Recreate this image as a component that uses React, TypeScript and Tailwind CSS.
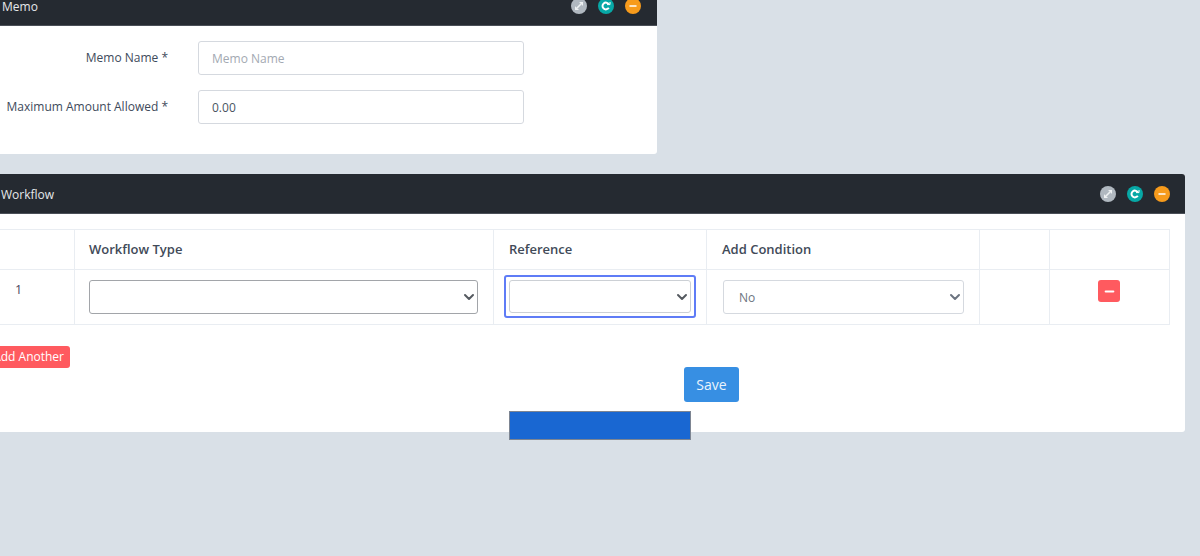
import React from "react";
import { Minus, ChevronDown } from "lucide-react";

function HeaderIcons() {
  return (
    <div className="flex items-center gap-[11px]">
      <span className="flex h-4 w-4 items-center justify-center rounded-full bg-[#b0b8c0]">
        <svg width="10" height="10" viewBox="0 0 10 10" fill="none" stroke="#eef1f3" strokeWidth="1.6" strokeLinecap="round">
          <path d="M2 8 L8 2" />
          <path d="M6 1.6 H8.4 V4" strokeWidth="1.2" />
          <path d="M1.6 6 V8.4 H4" strokeWidth="1.2" />
        </svg>
      </span>
      <span className="flex h-4 w-4 items-center justify-center rounded-full bg-[#07a8a6]">
        <svg width="10" height="10" viewBox="0 0 10 10" fill="none" stroke="#ffffff" strokeWidth="2">
          <path d="M7.8 3.2 A3.4 3.4 0 1 0 7.8 6.8" />
          <path d="M6 3.6 H9 V1" strokeWidth="1" />
        </svg>
      </span>
      <span className="flex h-4 w-4 items-center justify-center rounded-full bg-[#f79b1c] text-white">
        <Minus size={10} strokeWidth={4} />
      </span>
    </div>
  );
}

function MemoRow({ label, placeholder, value }: { label: string; placeholder?: string; value?: string }) {
  return (
    <div className="flex items-center">
      <label className="w-[208px] text-right text-[12px] text-[#3e4a5b]">{label}</label>
      <input
        readOnly
        placeholder={placeholder}
        value={value}
        className="ml-[30px] h-[34px] w-[326px] rounded-[3px] border border-[#d5d9df] bg-white px-[13px] text-[12px] text-[#4a5462] outline-none placeholder:text-[#a3a9b2]"
      />
    </div>
  );
}

function Select({ value, className, chevron }: { value?: string; className: string; chevron: string }) {
  return (
    <div className="relative w-full">
      <select className={`block w-full appearance-none rounded-[3px] bg-white text-[12px] outline-none ${className}`}>
        <option>{value}</option>
      </select>
      <ChevronDown size={16} strokeWidth={3} className={`pointer-events-none absolute right-[1px] top-1/2 -translate-y-1/2 ${chevron}`} />
    </div>
  );
}

const thClass = "border border-[#e9edf2] pl-[15px] text-left align-middle text-[13px] font-semibold text-[#414a58]";
const tdClass = "border border-[#e9edf2] align-top";

export default function App() {
  return (
    <div className="h-[556px] w-[1200px] overflow-hidden bg-[#d9e0e7] font-['Open_Sans','Noto_Sans',sans-serif]">
      <div className="-ml-[40px] -mt-[14px] flex w-[1225px] flex-col items-start gap-5">
        <section className="h-[168px] w-[697px] overflow-hidden rounded-[3px] bg-white">
          <header className="flex h-10 items-center justify-between border-b border-[#4a4f57] bg-[#252a31] pl-[42px] pr-4">
            <span className="pt-[2px] text-[12px] text-[#e6e8ea]">Memo</span>
            <HeaderIcons />
          </header>
          <div className="flex flex-col gap-[15px] pt-[15px]">
            <MemoRow label="Memo Name *" placeholder="Memo Name" />
            <MemoRow label="Maximum Amount Allowed *" value="0.00" />
          </div>
        </section>

        <section className="relative h-[258px] w-full rounded-[3px] bg-white">
          <header className="flex h-10 items-center justify-between rounded-t-[3px] border-b border-[#4a4f57] bg-[#252a31] pl-[41px] pr-[15px]">
            <span className="pt-[2px] text-[12px] text-[#e6e8ea]">Workflow</span>
            <HeaderIcons />
          </header>
          <div className="pt-[15px]">
            <table className="w-[1209px] table-fixed border-collapse">
              <colgroup>
                <col className="w-[114px]" />
                <col className="w-[419px]" />
                <col className="w-[213px]" />
                <col className="w-[273px]" />
                <col className="w-[70px]" />
                <col className="w-[120px]" />
              </colgroup>
              <thead>
                <tr className="h-10">
                  <th className={thClass}></th>
                  <th className={`${thClass} !pl-[14px]`}>Workflow Type</th>
                  <th className={thClass}>Reference</th>
                  <th className={thClass}>Add Condition</th>
                  <th className={thClass}></th>
                  <th className={thClass}></th>
                </tr>
              </thead>
              <tbody>
                <tr className="h-[55px]">
                  <td className={`${tdClass} pl-[54px] pt-[11px] text-[12.5px] text-[#4a3f5c]`}>1</td>
                  <td className={`${tdClass} pl-[14px] pt-[10px]`}>
                    <div className="w-[389px]">
                      <Select className="h-[34px] border border-[#a2a5a9] pl-2" chevron="text-[#555a60]" />
                    </div>
                  </td>
                  <td className={`${tdClass} pl-[10px] pt-[6px]`}>
                    <div className="-mt-[1px] h-[43px] w-[192px] rounded-[3px] border-2 border-[#5f7cf6] p-[3px]">
                      <Select className="h-[33px] border border-[#ccd0d5] pl-2" chevron="text-[#555a60]" />
                    </div>
                  </td>
                  <td className={`${tdClass} pl-[16px] pt-[10px]`}>
                    <div className="w-[241px]">
                      <Select value="No" className="h-[34px] border border-[#d5d9df] pl-[15px] pt-[1px] text-[#6c7480]" chevron="text-[#6c7480]" />
                    </div>
                  </td>
                  <td className={tdClass}></td>
                  <td className={`${tdClass} pt-[10px]`}>
                    <button className="ml-[48px] flex h-[22px] w-[22px] items-center justify-center rounded-[3px] bg-[#ff5a5f] text-white">
                      <Minus size={13} strokeWidth={4} />
                    </button>
                  </td>
                </tr>
              </tbody>
            </table>
          </div>
          <div className="pl-[5px] pt-[18px]">
            <button className="h-[22px] w-[105px] rounded-[3px] bg-[#ff5a5f] pr-[6px] text-right text-[12px] text-white">
              Add Another
            </button>
          </div>
          <div className="-mt-[1px] pl-[724px]">
            <button className="h-[35px] w-[55px] rounded-[3px] bg-[#378fe3] text-[14px] text-[#eaf3fc]">Save</button>
          </div>
          <div className="absolute left-[549px] top-[237px] h-[29px] w-[182px] border border-[#7d8592] bg-[#1967d2]" />
        </section>
      </div>
    </div>
  );
}
